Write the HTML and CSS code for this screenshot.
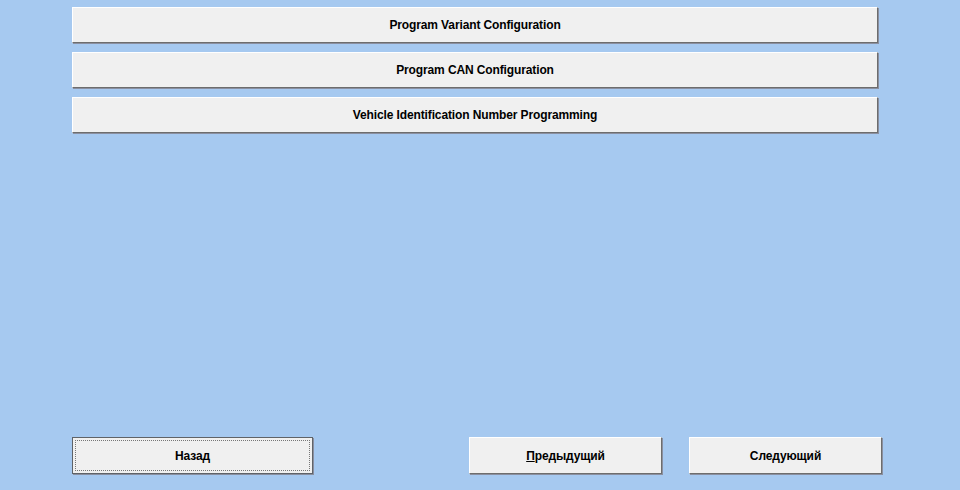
FILE: index.html
```html
<!DOCTYPE html>
<html lang="ru">
<head>
    <meta charset="UTF-8">
    <title>Конфигурация</title>
    <link rel="stylesheet" href="styles.css">
</head>
<body>

<div id="screen">
    <div id="actions">
        <button class="btn wide">Program Variant Configuration</button>
        <button class="btn wide">Program CAN Configuration</button>
        <button class="btn wide">Vehicle Identification Number Programming</button>
    </div>

    <!-- Навигация -->
    <div id="nav">
        <button class="btn nav-back focused"><span class="focus-rect">Назад</span></button>
        <div id="nav-right">
            <button class="btn nav-step"><u>П</u>редыдущий</button>
            <button class="btn nav-step">Следующий</button>
        </div>
    </div>
</div>

</body>
</html>
```

FILE: styles.css
```css
html, body { margin: 0; height: 100%; }
body { background: #a6c9f0; font-family: "Liberation Sans", Arial, sans-serif; }
#screen { display: flex; flex-direction: column; justify-content: space-between; height: 490px; box-sizing: border-box; padding: 7px 0 16px 72px; }
#actions { display: flex; flex-direction: column; gap: 9px; width: 806px; }
.btn { font-family: inherit; font-weight: bold; font-size: 12px; letter-spacing: -0.12px; color: #000; background: #f0f0f0; border: 1px solid; border-color: #fff #6d6d6d #6d6d6d #fff; box-shadow: 1px 1px 0 #8a8fa0; padding: 0; cursor: pointer; }
.btn.wide { height: 36px; }
.btn u { text-decoration: underline; }
#nav { display: flex; align-items: center; }
#nav-right { display: flex; gap: 27px; margin-left: 156px; }
.nav-back { width: 241px; height: 37px; border: 1px solid #5f6368; box-shadow: 1px 1px 0 #8a8fa0; padding: 2px; }
.focus-rect { display: flex; align-items: center; justify-content: center; height: 100%; border: 1px dotted #777; box-sizing: border-box; }
.nav-step { width: 193px; height: 37px; }
```
